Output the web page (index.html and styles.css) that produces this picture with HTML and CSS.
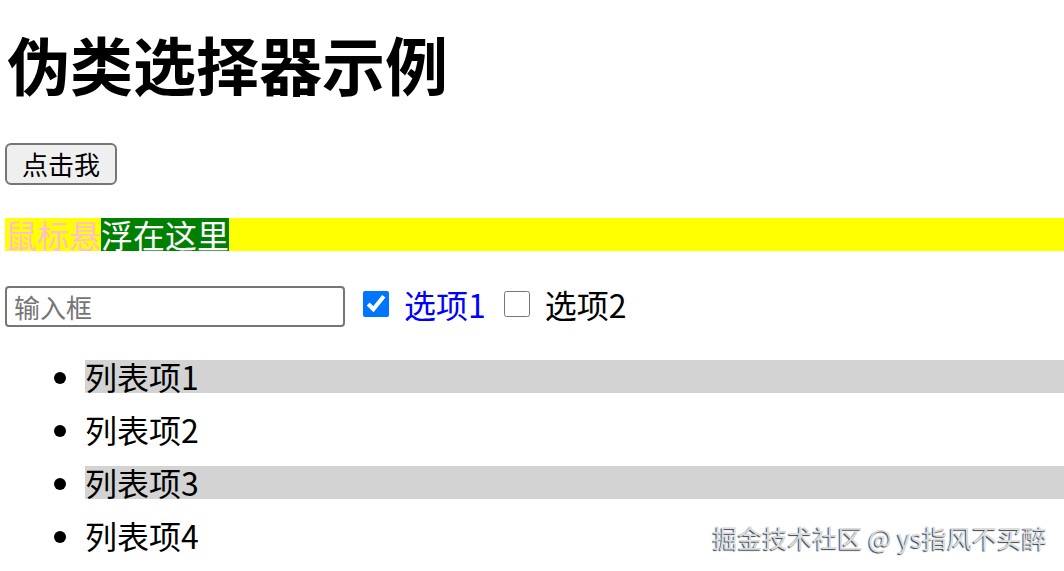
FILE: index.html
```html
<!DOCTYPE html>
<html lang="zh-CN">
<head>
  <meta charset="UTF-8">
  <meta name="viewport" content="width=device-width, initial-scale=1.0">
  <link rel="stylesheet" href="styles.css">
</head>
<body>
  <h1>伪类选择器示例</h1>

  <button class="click-btn">点击我</button>

  <p class="hover-text"><span class="pink">鼠标悬</span><span class="green">浮在这里</span></p>

  <div class="form-row">
    <input type="text" class="text-input" placeholder="输入框">
    <input type="checkbox" id="opt1" class="check" checked>
    <label for="opt1" class="opt">选项1</label>
    <input type="checkbox" id="opt2" class="check">
    <label for="opt2" class="opt">选项2</label>
  </div>

  <ul class="list">
    <li>列表项1</li>
    <li>列表项2</li>
    <li>列表项3</li>
    <li>列表项4</li>
  </ul>

  <div class="watermark">掘金技术社区 @ ys指风不买醉</div>
</body>
</html>
```

FILE: styles.css
```css
body {
  font-family: "Noto Sans CJK SC", "Liberation Sans", sans-serif;
  margin: 0;
  padding: 0 0 0 5px;
  color: #000;
  background: #fff;
  overflow: hidden;
  height: 571px;
  position: relative;
}

h1 {
  font-size: 63px;
  line-height: 63px;
  font-weight: bold;
  margin: 31px 0 49px 2px;
}

.click-btn {
  display: block;
  font-family: inherit;
  font-size: 26px;
  line-height: 34px;
  padding: 2px 15px;
  border: 2px solid #767676;
  border-radius: 6px;
  background-color: #efefef;
  color: #000;
}

.hover-text {
  font-size: 32px;
  line-height: 33px;
  height: 33px;
  margin: 33px 0 35px 0;
  background-color: yellow;
}

.pink {
  color: pink;
}

.green {
  display: inline-block;
  vertical-align: top;
  line-height: 33px;
  background-color: green;
  color: white;
}

.form-row {
  display: flex;
  align-items: center;
  height: 41px;
}

.text-input {
  box-sizing: border-box;
  width: 340px;
  height: 41px;
  margin: 0;
  padding: 0 7px;
  font-family: inherit;
  font-size: 26px;
  border: 2px solid #767676;
  border-radius: 4px;
}

.text-input::placeholder {
  color: #757575;
}

.check {
  width: 26px;
  height: 26px;
  margin: 0 15px 6px 18px;
}

.opt {
  font-size: 32px;
  line-height: 41px;
  padding-bottom: 4px;
}

#opt1:checked + .opt {
  color: blue;
}

.list {
  margin: 33px 0 0 0;
  padding-left: 80px;
  font-size: 32px;
  line-height: 33px;
}

.list li {
  margin-bottom: 20px;
}

.list li:nth-child(odd) {
  background-color: lightgray;
}

.watermark {
  position: absolute;
  right: 17px;
  bottom: 19px;
  font-size: 25px;
  line-height: 30px;
  color: #dcdcdc;
  text-shadow: -1px 1px 1px rgba(0, 0, 0, 0.75);
}
```
